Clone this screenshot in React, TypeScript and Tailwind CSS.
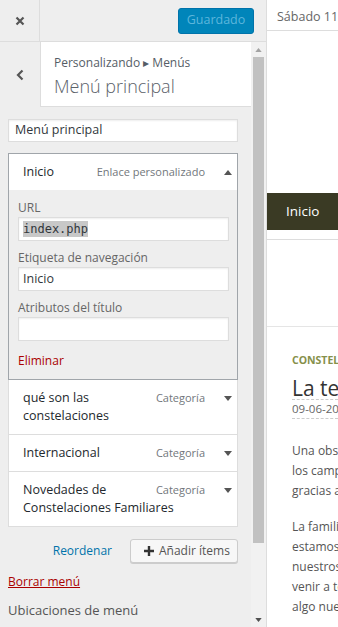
import React from "react";

function Caret({ up = false, className = "" }: { up?: boolean; className?: string }) {
  return (
    <svg width="8" height="5" viewBox="0 0 8 5" className={className} aria-hidden>
      <path d={up ? "M0 5L4 0L8 5Z" : "M0 0L8 0L4 5Z"} fill="currentColor" />
    </svg>
  );
}

function MenuItem({ title, type }: { title: string; type: string }) {
  return (
    <div className="border-t border-[#ddd] bg-white py-[9px] pl-[14px] pr-[5px] text-[12.5px] leading-[18px] first:border-t-0">
      <span className="float-right flex h-[18px] items-center gap-[19px] pl-2 text-[11px] text-[#72777c]">
        {type}
        <Caret className="text-[#555]" />
      </span>
      <span className="text-[#23282d]">{title}</span>
    </div>
  );
}

function Field({ label, value, mono = false }: { label: string; value?: string; mono?: boolean }) {
  return (
    <div className="mt-[8px] first:mt-0">
      <div className="text-[12px] leading-[17px] text-[#666]">{label}</div>
      <div className="mt-px flex h-[24px] items-center border border-[#ddd] bg-white px-[4px] shadow-[inset_0_1px_2px_rgba(0,0,0,0.07)]">
        {mono ? (
          <span className="bg-[#c8c8c8] font-['DejaVu_Sans_Mono',monospace] text-[12px] leading-[16px] text-[#32373c]">
            {value}
          </span>
        ) : (
          <span className="text-[12.5px] text-[#32373c]">{value}</span>
        )}
      </div>
    </div>
  );
}

function Scrollbar() {
  return (
    <div className="flex w-[15px] shrink-0 flex-col bg-[#f1f1f1]">
      <div className="flex h-[15px] items-center justify-center text-[#a3a3a3]">
        <Caret up className="h-[4px] w-[7px]" />
      </div>
      <div className="mx-[2px] h-[486px] bg-[#c1c1c1]" />
      <div className="flex-1" />
      <div className="flex h-[15px] items-center justify-center text-[#505050]">
        <Caret className="h-[4px] w-[7px]" />
      </div>
    </div>
  );
}

function Sidebar() {
  return (
    <aside className="flex w-[267px] shrink-0 flex-col border-r border-[#ddd] bg-[#eee]">
      <div className="flex h-[42px] shrink-0 items-center border-b border-[#ddd]">
        <button
          type="button"
          className="flex h-full w-[40px] items-center justify-center border-r border-[#ddd] text-[#555]"
          title="Cerrar"
        >
          <svg width="10" height="10" viewBox="0 0 10 10">
            <path d="M1.5 1.5L8.5 8.5M8.5 1.5L1.5 8.5" stroke="currentColor" strokeWidth="2.2" />
          </svg>
        </button>
        <div className="flex-1" />
        <button
          type="button"
          className="mr-[12px] h-[26px] w-[76px] rounded-[3px] border border-[#0073aa] bg-[#0085ba] text-[12.5px] text-[#5cb6dc]"
        >
          Guardado
        </button>
      </div>

      <div className="flex min-h-0 flex-1">
        <div className="min-w-0 flex-1 overflow-hidden">
          <div className="flex h-[65px]">
            <button type="button" className="flex w-[40px] items-center justify-center text-[#555]" title="Volver">
              <svg width="8" height="12" viewBox="0 0 8 12">
                <path d="M6.5 1.5L2 6L6.5 10.5" fill="none" stroke="currentColor" strokeWidth="2.2" />
              </svg>
            </button>
            <div className="flex-1 border-b border-l border-[#ddd] bg-white pl-[13px] pt-[12px]">
              <div className="text-[12px] leading-[18px] text-[#555d66]">Personalizando ▸ Menús</div>
              <div className="mt-[1px] text-[18px] font-light leading-[26px] text-[#5b626a]">Menú principal</div>
            </div>
          </div>

          <div className="pl-[8px] pr-[13px] pt-[12px]">
            <div className="flex h-[23px] items-center border border-[#ddd] bg-white px-[6px] text-[12.5px] text-[#32373c] shadow-[inset_0_1px_2px_rgba(0,0,0,0.07)]">
              Menú principal
            </div>

            <div className="mt-[11px] border border-[#a0a5aa]">
              <div className="bg-white py-[9px] pl-[14px] pr-[5px] text-[12.5px] leading-[18px]">
                <span className="float-right flex h-[18px] items-center gap-[19px] text-[11px] text-[#72777c]">
                  Enlace personalizado
                  <Caret up className="text-[#555]" />
                </span>
                <span className="font-medium text-[#23282d]">Inicio</span>
              </div>
              <div className="bg-[#eee] pb-[9px] pl-[9px] pr-[8px] pt-[9px]">
                <Field label="URL" value="index.php" mono />
                <Field label="Etiqueta de navegación" value="Inicio" />
                <Field label="Atributos del título" />
                <a href="#" className="mt-[11px] block text-[12px] leading-[18px] text-[#a00]">
                  Eliminar
                </a>
              </div>
            </div>

            <div className="border-x border-b border-[#ddd]">
              <MenuItem title="qué son las constelaciones" type="Categoría" />
              <MenuItem title="Internacional" type="Categoría" />
              <MenuItem title="Novedades de Constelaciones Familiares" type="Categoría" />
            </div>

            <div className="mt-[12px] flex items-center justify-end gap-[18px]">
              <a href="#" className="text-[12px] text-[#0073aa]">
                Reordenar
              </a>
              <button
                type="button"
                className="flex h-[24px] w-[108px] items-center gap-[5px] rounded-[3px] border border-[#ccc] bg-[#f7f7f7] pl-[13px] text-[12px] text-[#555] shadow-[0_1px_0_#ccc]"
              >
                <svg width="10" height="10" viewBox="0 0 10 10">
                  <path d="M5 0V10M0 5H10" stroke="#333" strokeWidth="2.4" />
                </svg>
                Añadir ítems
              </button>
            </div>

            <a href="#" className="mt-[10px] block w-fit text-[12px] leading-[18px] text-[#a00] underline">
              Borrar menú
            </a>
            <div className="mt-[9px] text-[13px] font-medium leading-[20px] text-[#555]">Ubicaciones de menú</div>
          </div>
        </div>
        <Scrollbar />
      </div>
    </aside>
  );
}

function Preview() {
  const para1 = ["Una observación sobre", "los campos en los que", "gracias a la mirada"];
  const para2 = [
    "La familia es el lugar donde",
    "estamos conectados con",
    "nuestros padres, para",
    "venir a tener",
    "algo nuevo en la vida",
  ];
  return (
    <main className="flex min-w-0 flex-1 flex-col overflow-hidden bg-white">
      <div className="h-[31px] shrink-0 whitespace-nowrap border-b border-[#ddd] pl-[10px] pt-[8px] text-[12.5px] leading-[18px] text-[#666]">
        Sábado 11 junio, 2016
      </div>
      <div className="mt-[162px] flex h-[37px] shrink-0 items-center bg-[#3a3a24] pl-[19px] text-[13.5px] text-white">
        Inicio
      </div>
      <div className="h-[10px] shrink-0 border-b border-[#ddd]" />
      <div className="h-[87px] shrink-0 border-b border-[#e5e5e5]" />
      <div className="whitespace-nowrap pl-[25px] pt-[26px]">
        <div className="text-[10.5px] font-bold leading-[14px] text-[#86904a]">CONSTELACIONES</div>
        <div className="mt-[10px] text-[21px] leading-[22px] text-[#333]">La tecnología</div>
        <div className="border-y border-dashed border-[#ccc] py-[1px] text-[11.5px] leading-[16px] text-[#666]">
          09-06-2016
        </div>
        <div className="mt-[22px] text-[12px] leading-[20px] text-[#555]">
          {para1.map((l) => (
            <div key={l}>{l}</div>
          ))}
        </div>
        <div className="mt-[16px] text-[12px] leading-[20px] text-[#555]">
          {para2.map((l) => (
            <div key={l}>{l}</div>
          ))}
        </div>
      </div>
    </main>
  );
}

export default function App() {
  return (
    <div className="flex h-[627px] w-[338px] overflow-hidden bg-white font-['Open_Sans',sans-serif]">
      <Sidebar />
      <Preview />
    </div>
  );
}
